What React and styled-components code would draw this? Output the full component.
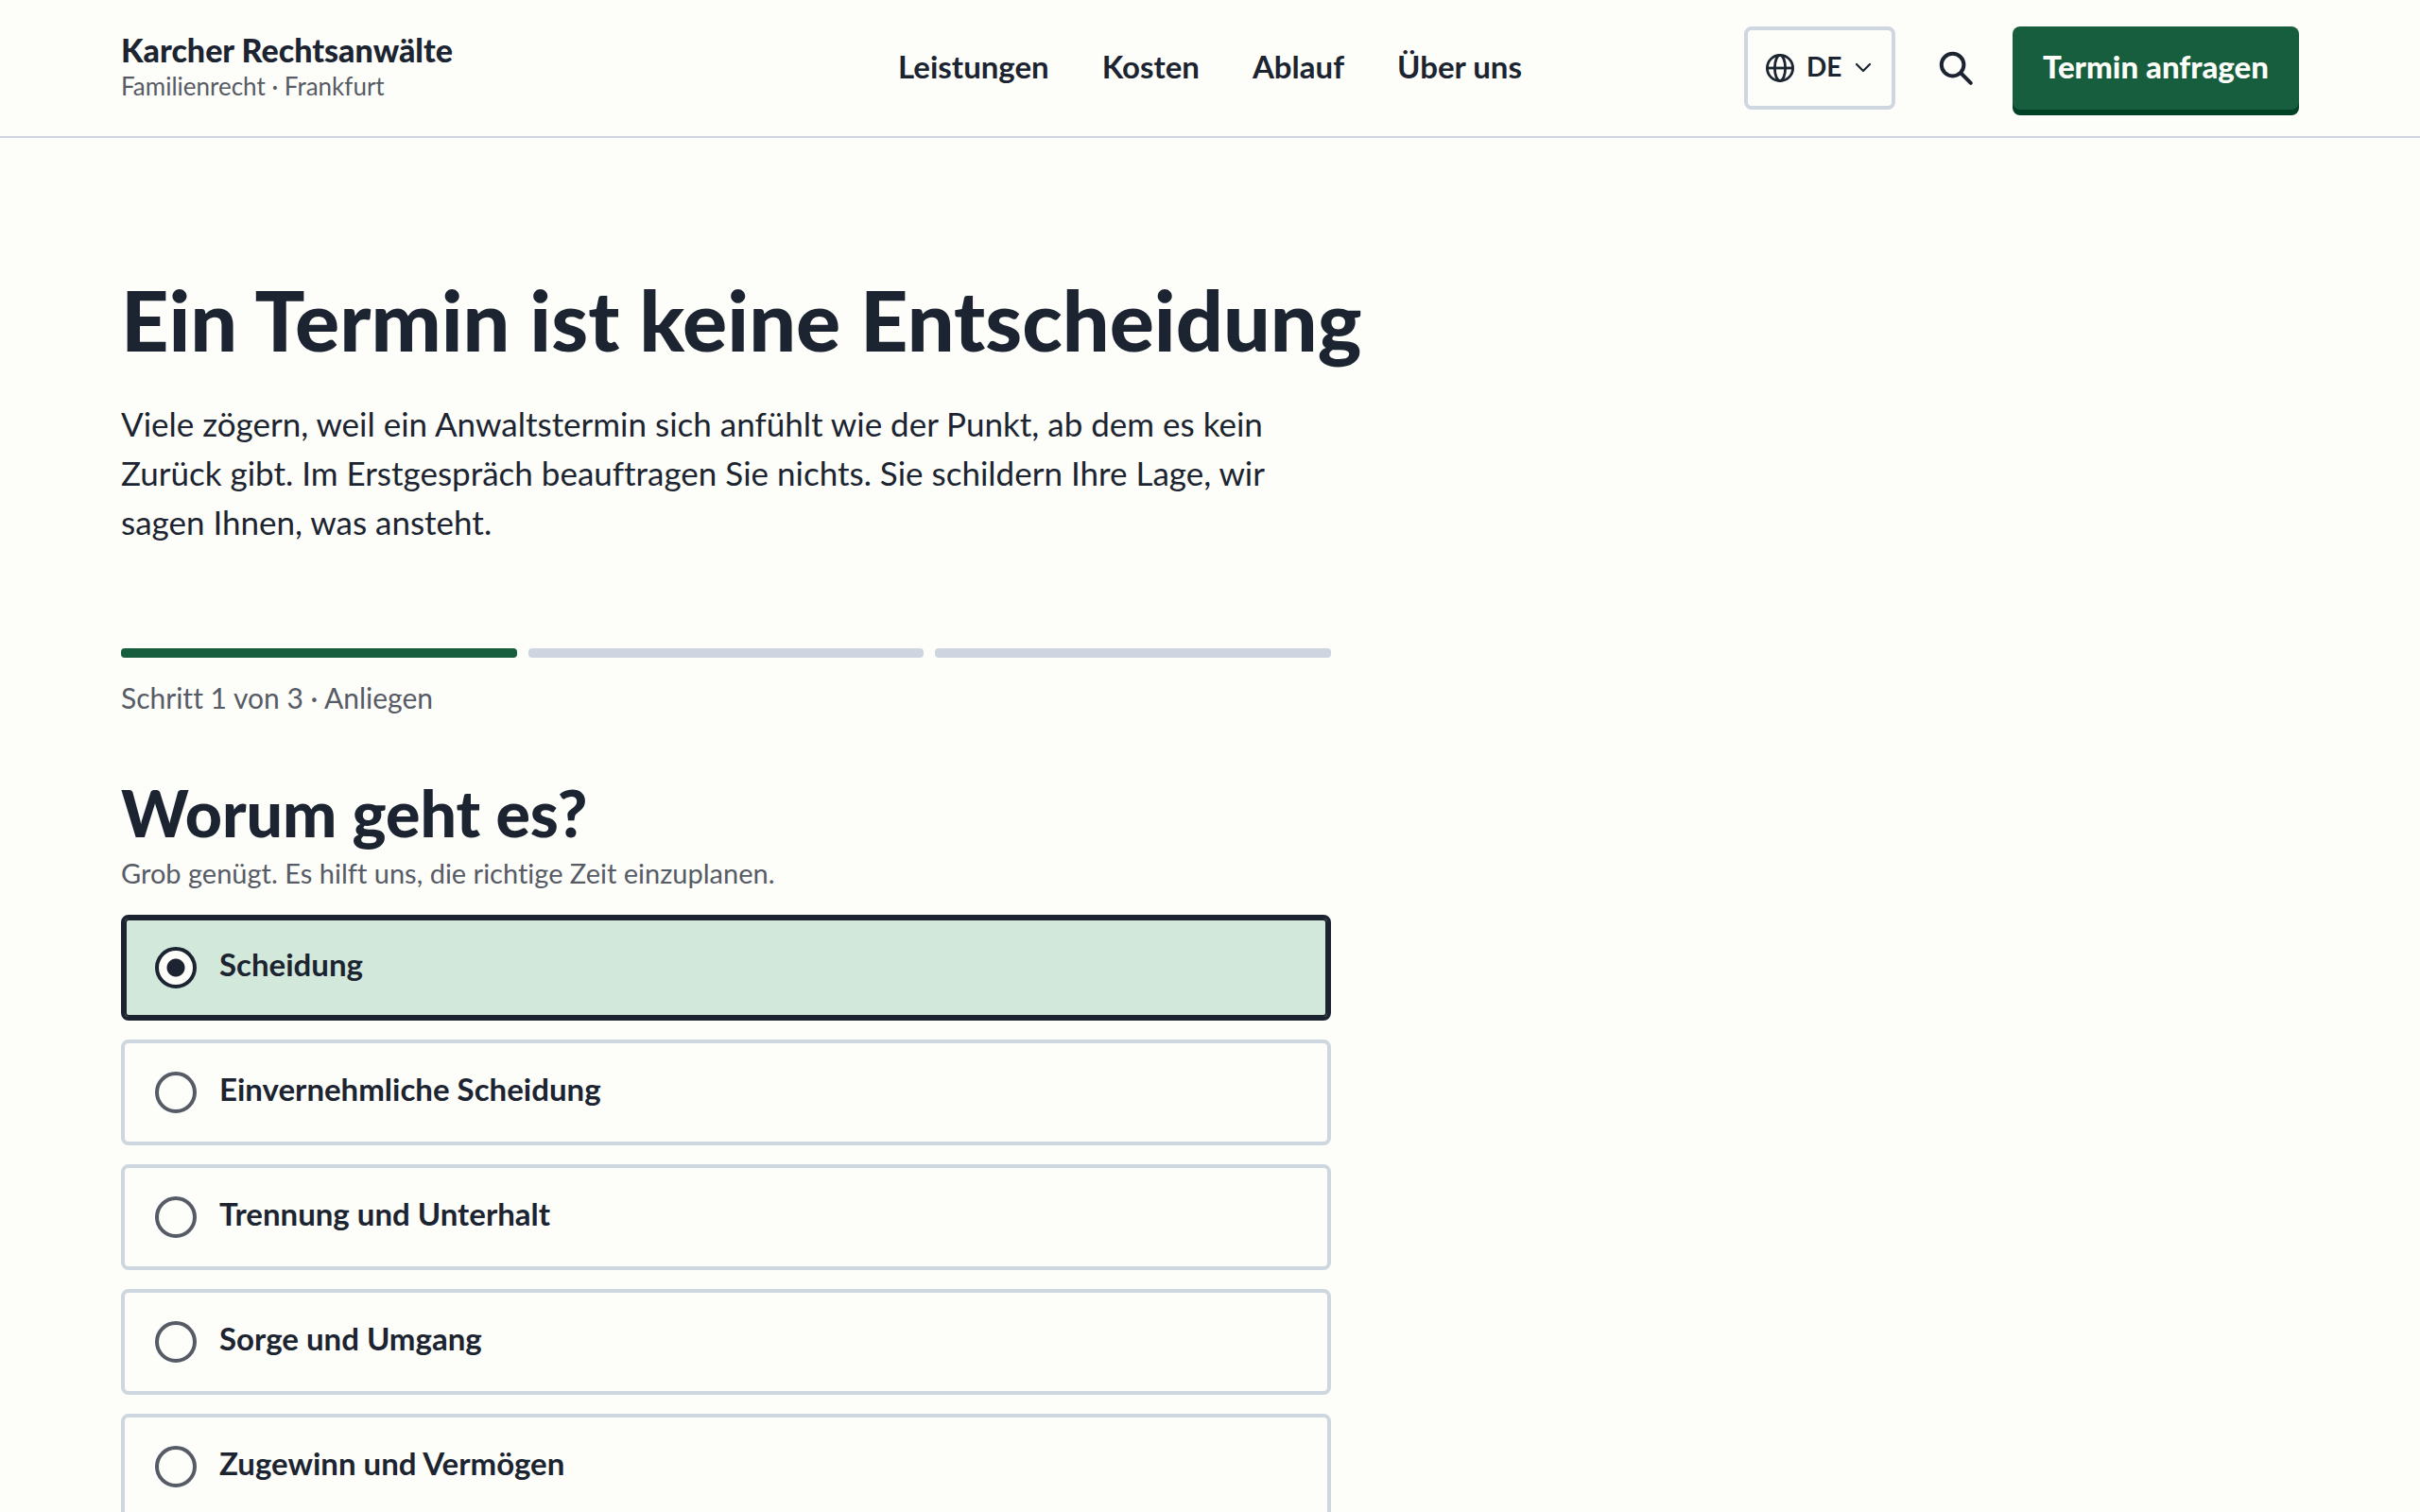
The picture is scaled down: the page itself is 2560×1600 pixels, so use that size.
import React, {useState} from "react"
import styled, {createGlobalStyle} from "styled-components"

const ink = "#1b2430"
const muted = "#565b66"
const paper = "#fdfdf9"
const line = "#ced6df"
const green = "#175e3e"
const greenDark = "#004225"
const mint = "#d2e8da"
const heavy = `"Lato Black", Lato, "Liberation Sans", sans-serif`

const GlobalStyle = createGlobalStyle`
  *, *::before, *::after {
    box-sizing: border-box;
  }
  body {
    margin: 0;
    color: ${ink};
    background-color: ${paper};
    font-family: Lato, "Liberation Sans", sans-serif;
    font-size: 33px;
    font-variant-ligatures: none;
  }
  h1, h2, p, fieldset {
    margin: 0;
    padding: 0;
    border: 0;
  }
`
const Header = styled.header`
  display: grid;
  grid-template-columns: 1fr auto 1fr;
  align-items: center;
  padding: 28px 5%;
  border-bottom: 2px solid #d1d4e0;
`
const Brand = styled.a`
  justify-self: start;
  padding-bottom: 2px;
  color: ${ink};
  text-decoration: none;
`
const BrandName = styled.div`
  font-family: ${heavy};
  font-size: 34px;
  line-height: 40px;
  font-weight: 900;
`
const BrandNote = styled.div`
  font-size: 26px;
  line-height: 36px;
  color: ${muted};
`
const Nav = styled.nav`
  display: flex;
  gap: 56px;
  padding-bottom: 4px;
`
const NavLink = styled.a`
  font-weight: 700;
  color: ${ink};
  text-decoration: none;
`
const Actions = styled.div`
  display: flex;
  justify-self: end;
  align-items: center;
`
const Language = styled.label`
  display: flex;
  align-items: center;
  gap: 12px;
  height: 88px;
  padding: 0 20px 0 18px;
  border: 4px solid ${line};
  border-radius: 8px;
`
const LanguageSelect = styled.select`
  appearance: none;
  padding: 0 0 4px;
  border: 0;
  color: ${ink};
  background: none;
  font-family: inherit;
  font-size: 28px;
  font-weight: 700;
`
const SearchButton = styled.button`
  display: grid;
  place-items: center;
  width: 80px;
  height: 88px;
  margin: 0 20px 0 24px;
  padding: 0;
  border: 0;
  color: ${ink};
  background: none;
`
const CallButton = styled.button`
  height: 88px;
  padding: 0 32px 4px;
  border: 0;
  border-radius: 8px;
  box-shadow: 0 6px 0 ${greenDark};
  color: ${paper};
  background-color: ${green};
  font-family: inherit;
  font-size: 33px;
  font-weight: 900;
`
const Main = styled.main`
  padding: 144px 5% 96px;
`
const Title = styled.h1`
  font-family: ${heavy};
  font-size: 88px;
  line-height: 96px;
  font-weight: 900;
`
const Lead = styled.p`
  max-width: 1240px;
  margin-top: 36px;
  font-size: 35px;
  line-height: 52px;
`
const Form = styled.form`
  max-width: 1280px;
  margin-top: 108px;
`
const Steps = styled.div`
  display: grid;
  grid-template-columns: repeat(3, 1fr);
  gap: 12px;
`
const Step = styled.div`
  height: 10px;
  border-radius: 4px;
  background-color: ${props => (props.$done ? green : "#cfd5e0")};
`
const StepText = styled.p`
  margin-top: 22px;
  font-size: 30px;
  line-height: 40px;
  color: ${muted};
`
const Question = styled.h2`
  margin-top: 64px;
  font-family: ${heavy};
  font-size: 68px;
  line-height: 76px;
  font-weight: 900;
`
const Hint = styled.p`
  margin-top: 6px;
  font-size: 29px;
  line-height: 40px;
  color: ${muted};
`
const Options = styled.fieldset`
  display: grid;
  gap: 20px;
  margin-top: 24px;
`
const Option = styled.label`
  display: flex;
  align-items: center;
  gap: 24px;
  height: 112px;
  padding: 0 32px;
  border: 4px solid ${line};
  border-radius: 8px;
  font-weight: 700;

  &:has(input:checked) {
    border-color: ${ink};
    box-shadow: inset 0 0 0 2px ${ink};
    background-color: ${mint};
  }
`
const OptionText = styled.span`
  padding-bottom: 8px;
`
const Radio = styled.input`
  appearance: none;
  width: 44px;
  height: 44px;
  margin: 0;
  border: 4px solid ${muted};
  border-radius: 50%;

  &:checked {
    border-color: ${ink};
    background: radial-gradient(circle, ${ink} 9px, ${paper} 10px);
  }
`

const topics = [
  "Scheidung",
  "Einvernehmliche Scheidung",
  "Trennung und Unterhalt",
  "Sorge und Umgang",
  "Zugewinn und Vermögen",
]

const GlobeIcon = () => (
  <svg width="32" height="32" viewBox="0 0 32 32" fill="none" stroke="currentColor" strokeWidth="2.8">
    <circle cx="16" cy="16" r="13.6" />
    <ellipse cx="16" cy="16" rx="5.6" ry="13.6" />
    <path d="M2.400 16h27.200" />
  </svg>
)

const ChevronIcon = () => (
  <svg width="20" height="20" viewBox="0 0 20 20" fill="none" stroke="currentColor" strokeWidth="2.2" strokeLinecap="round" strokeLinejoin="round">
    <path d="M3 6l7 7 7-7" />
  </svg>
)

const SearchIcon = () => (
  <svg width="40" height="40" viewBox="0 0 40 40" fill="none" stroke="currentColor" strokeWidth="4" strokeLinecap="round">
    <circle cx="16.6" cy="16.6" r="11.8" />
    <path d="M25.500 25.500l10.300 10.300" />
  </svg>
)

export default function App() {
  const [topic, setTopic] = useState(topics[0])

  return (
    <>
      <GlobalStyle />
      <Header>
        <Brand href="#start">
          <BrandName>Karcher Rechtsanwälte</BrandName>
          <BrandNote>Familienrecht · Frankfurt</BrandNote>
        </Brand>
        <Nav>
          <NavLink href="#leistungen">Leistungen</NavLink>
          <NavLink href="#kosten">Kosten</NavLink>
          <NavLink href="#ablauf">Ablauf</NavLink>
          <NavLink href="#team">Über uns</NavLink>
        </Nav>
        <Actions>
          <Language>
            <GlobeIcon />
            <LanguageSelect aria-label="Sprache">
              <option>DE</option>
            </LanguageSelect>
            <ChevronIcon />
          </Language>
          <SearchButton aria-label="Suche">
            <SearchIcon />
          </SearchButton>
          <CallButton>Termin anfragen</CallButton>
        </Actions>
      </Header>
      <Main>
        <Title>Ein Termin ist keine Entscheidung</Title>
        <Lead>
          Viele zögern, weil ein Anwaltstermin sich anfühlt wie der Punkt, ab dem es kein Zurück
          gibt. Im Erstgespräch beauftragen Sie nichts. Sie schildern Ihre Lage, wir sagen Ihnen,
          was ansteht.
        </Lead>
        <Form>
          <Steps>
            <Step $done />
            <Step />
            <Step />
          </Steps>
          <StepText>Schritt 1 von 3 · Anliegen</StepText>
          <Question id="frage">Worum geht es?</Question>
          <Hint>Grob genügt. Es hilft uns, die richtige Zeit einzuplanen.</Hint>
          <Options aria-labelledby="frage">
            {topics.map(name => (
              <Option key={name}>
                <Radio
                  type="radio"
                  name="anliegen"
                  checked={topic === name}
                  onChange={() => setTopic(name)}
                />
                <OptionText>{name}</OptionText>
              </Option>
            ))}
          </Options>
        </Form>
      </Main>
    </>
  )
}
